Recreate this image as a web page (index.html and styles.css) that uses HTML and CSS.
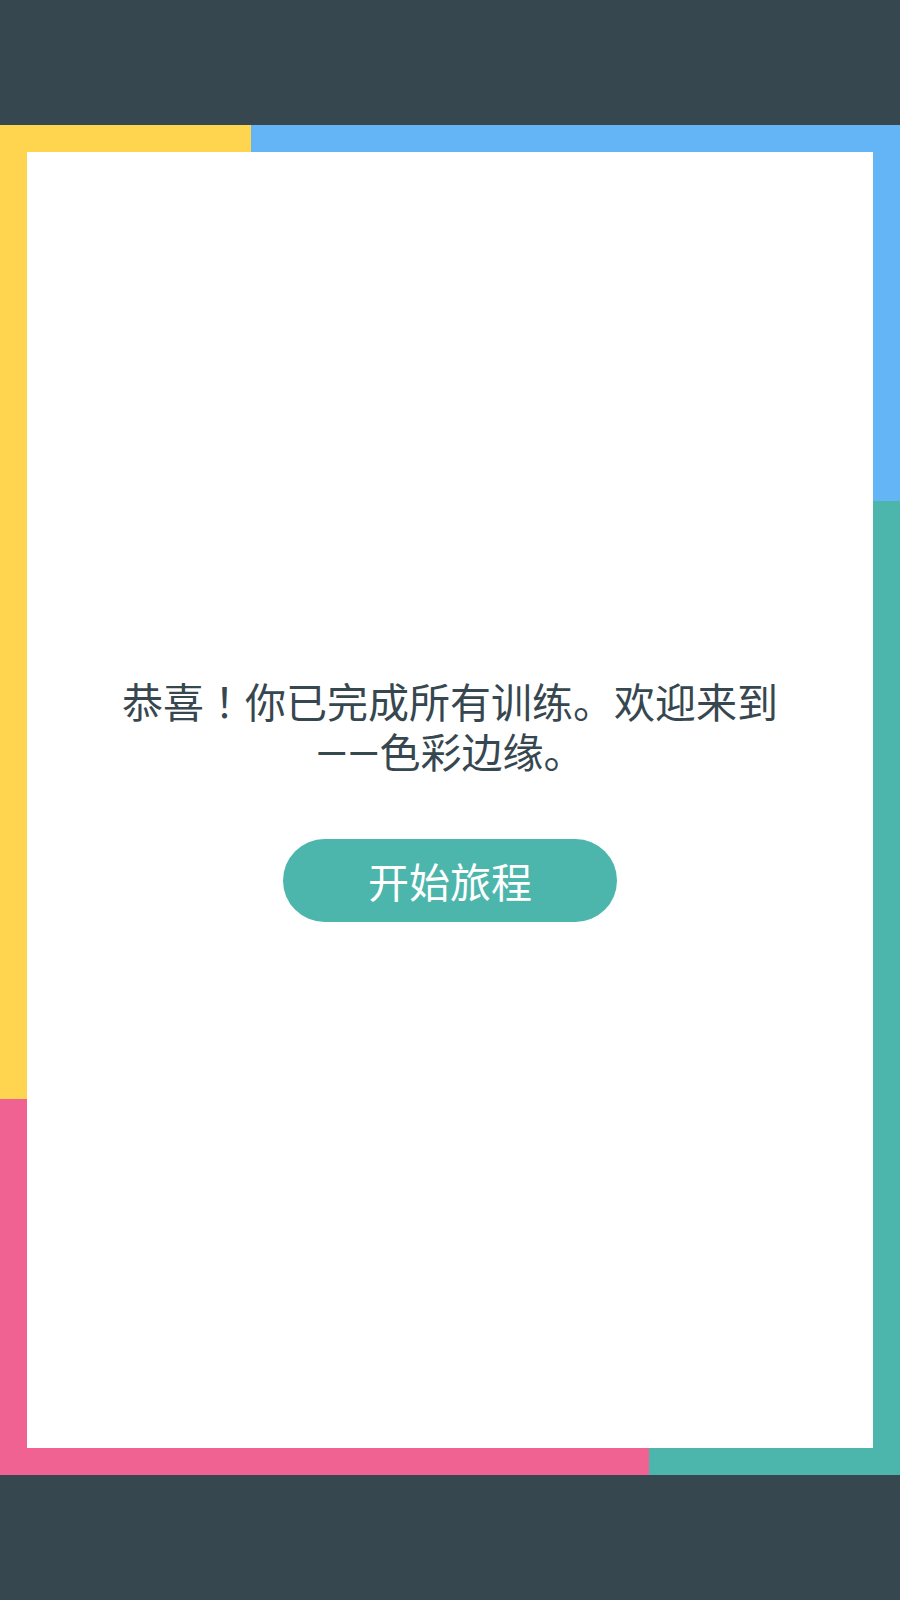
FILE: index.html
```html
<!DOCTYPE html>
<html lang="zh-CN">
<head>
<meta charset="utf-8">
<title>色彩边缘</title>
<link rel="stylesheet" href="styles.css">
</head>
<body>
<div class="frame">
  <main class="panel">
    <p class="message">恭喜<span class="punct" lang="zh-TW">！</span>你已完成所有训练。欢迎来到——色彩边缘。</p>
    <button class="start" type="button">开始旅程</button>
  </main>
</div>
</body>
</html>
```

FILE: styles.css
```css
html, body {
  margin: 0;
  padding: 0;
  background: #37474f;
}

body {
  width: 900px;
  height: 1600px;
  font-family: Roboto, "Noto Sans CJK SC", sans-serif;
}

.frame {
  box-sizing: border-box;
  margin-top: 125px;
  width: 900px;
  height: 1350px;
  padding: 27px;
  background:
    linear-gradient(to right, #ffd54f 251px, #64b5f6 251px) top left / 100% 27px no-repeat,
    linear-gradient(to bottom, #64b5f6 376px, #4db6ac 376px) top right / 27px 100% no-repeat,
    linear-gradient(to right, #f06292 649px, #4db6ac 649px) bottom left / 100% 27px no-repeat,
    linear-gradient(to bottom, #ffd54f 974px, #f06292 974px) top left / 27px 100% no-repeat,
    #ffffff;
}

.panel {
  height: 100%;
  background: #ffffff;
  display: flex;
  flex-direction: column;
  align-items: center;
  justify-content: center;
}

.message {
  margin: 0;
  padding: 0 90px;
  font-size: 41px;
  line-height: 50px;
  color: #37474f;
  text-align: center;
}

.punct {
  font-family: Roboto, "Noto Sans CJK TC", sans-serif;
}

.start {
  margin-top: 60px;
  width: 334px;
  height: 83px;
  border: none;
  border-radius: 42px;
  background: #4db6ac;
  color: #ffffff;
  font-family: Roboto, "Noto Sans CJK SC", sans-serif;
  font-size: 41px;
  padding: 0;
  cursor: pointer;
}
```
